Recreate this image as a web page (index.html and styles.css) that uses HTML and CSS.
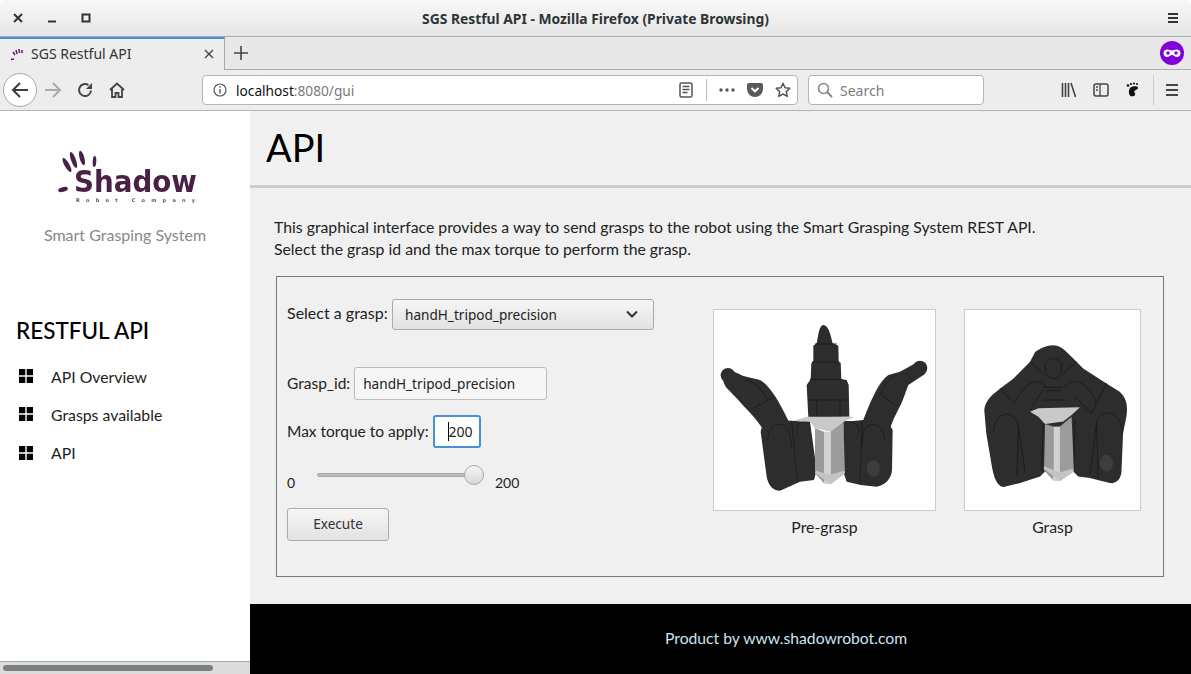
FILE: index.html
```html
<!DOCTYPE html>
<html lang="en">
<head>
<meta charset="utf-8">
<title>SGS Restful API</title>
<link rel="stylesheet" href="styles.css">
</head>
<body>
<header class="titlebar">
  <div class="wm-left">
    <svg class="wm" viewBox="0 0 10 10"><path d="M1 1l8 8M9 1l-8 8" stroke="#2e3436" stroke-width="2"/></svg>
    <svg class="wm" viewBox="0 0 10 10"><path d="M1 8.500h8" stroke="#2e3436" stroke-width="2"/></svg>
    <svg class="wm" viewBox="0 0 10 10"><rect x="1.500" y="1.500" width="7" height="7" fill="none" stroke="#2e3436" stroke-width="2"/></svg>
  </div>
  <div class="wm-title">SGS Restful API - Mozilla Firefox (Private Browsing)</div>
  <svg class="wm-menu" viewBox="0 0 12 12"><path d="M1 2h10M1 6h10M1 10h10" stroke="#2e3436" stroke-width="2"/></svg>
</header>
<div class="tabbar">
  <div class="tab">
    <svg class="favicon" viewBox="0 0 16 16"><path d="M2 13.500l3 -.5M4 6l2 3M7 4l1 4M10 3l.5 4M13 4v3" stroke="#5b1f6b" stroke-width="1.500" fill="none"/></svg>
    <span class="tab-title">SGS Restful API</span>
    <svg class="tab-close" viewBox="0 0 10 10"><path d="M1 1l8 8M9 1l-8 8" stroke="#444" stroke-width="1.400"/></svg>
  </div>
  <svg class="newtab" viewBox="0 0 14 14"><path d="M7 0v14M0 7h14" stroke="#444" stroke-width="1.600"/></svg>
  <svg class="private" viewBox="0 0 24 24"><circle cx="12" cy="12" r="12" fill="#8000d7"/><path d="M3.500 12c0-2.500 2-3.500 4-3.500 2 0 3 1 4.500 1s2.500-1 4.500-1 4 1 4 3.500-1.500 4-3.500 4c-2.500 0-3-2-5-2s-2.500 2-5 2c-2 0-3.500-1.500-3.500-4z" fill="#fff"/><circle cx="8" cy="12" r="1.700" fill="#8000d7"/><circle cx="16" cy="12" r="1.700" fill="#8000d7"/></svg>
</div>
<nav class="navbar">
  <div class="back"><svg class="ic18" viewBox="0 0 18 18"><path d="M17 9H2M9 2L2 9l7 7" fill="none" stroke="#3d3d3d" stroke-width="2"/></svg></div>
  <div class="tbtn"><svg class="ic18" viewBox="0 0 18 18"><path d="M1 9h15M9 2l7 7-7 7" fill="none" stroke="#aaa" stroke-width="2"/></svg></div>
  <div class="tbtn"><svg class="ic16" viewBox="0 0 16 16"><path d="M14 8.500A6 6 0 1 1 11.500 3.200" fill="none" stroke="#444" stroke-width="2"/><path d="M15 1v6H9z" fill="#444"/></svg></div>
  <div class="tbtn"><svg class="ic16" viewBox="0 0 16 16"><path d="M1 8l7-6.500L15 8M3 7v8h3.500v-4h3v4H13V7" fill="none" stroke="#444" stroke-width="1.800"/></svg></div>
  <div class="urlbar">
    <svg class="info" viewBox="0 0 14 14"><circle cx="7" cy="7" r="6" fill="none" stroke="#555" stroke-width="1.200"/><path d="M7 6v4.500M7 3.300v1.500" stroke="#555" stroke-width="1.400"/></svg>
    <span class="url"><span class="host">localhost</span>:8080/gui</span>
    <svg class="reader" viewBox="0 0 14 16"><rect x="1" y="1" width="12" height="14" rx="1.500" fill="none" stroke="#555" stroke-width="1.500"/><path d="M3.500 4.500h7M3.500 7.500h7M3.500 10.500h5" stroke="#555" stroke-width="1.300"/></svg>
    <span class="url-sep"></span>
    <svg class="dots" viewBox="0 0 16 4"><circle cx="2" cy="2" r="1.700" fill="#555"/><circle cx="8" cy="2" r="1.700" fill="#555"/><circle cx="14" cy="2" r="1.700" fill="#555"/></svg>
    <svg class="pocket" viewBox="0 0 16 14"><path d="M2 0h12a2 2 0 0 1 2 2v4A8 8 0 0 1 0 6V2a2 2 0 0 1 2-2z" fill="#5a5a5a"/><path d="M4.500 5L8 8.300 11.500 5" fill="none" stroke="#fff" stroke-width="2"/></svg>
    <svg class="star" viewBox="0 0 16 16"><path d="M8 1.300l2 4.400 4.800.6-3.500 3.300.9 4.800L8 12l-4.200 2.400.9-4.800L1.200 6.300 6 5.700z" fill="none" stroke="#555" stroke-width="1.500" stroke-linejoin="round"/></svg>
  </div>
  <div class="searchbar">
    <svg class="mag" viewBox="0 0 16 16"><circle cx="6.500" cy="6.500" r="5" fill="none" stroke="#888" stroke-width="1.600"/><path d="M10 10l5 5" stroke="#888" stroke-width="2"/></svg>
    <span class="search-text">Search</span>
  </div>
  <div class="tbtn lib"><svg class="ic16" viewBox="0 0 16 16"><path d="M1.500 1v14M4.500 1v14M7.500 1v14M10 1l4.500 14" fill="none" stroke="#444" stroke-width="1.600"/></svg></div>
  <div class="tbtn"><svg class="ic16" viewBox="0 0 16 16"><rect x="1" y="2" width="14" height="12" rx="2" fill="none" stroke="#444" stroke-width="1.500"/><path d="M7 2v12M3 5h2M3 8h2" stroke="#444" stroke-width="1.300"/></svg></div>
  <div class="tbtn"><svg class="ic16" viewBox="0 0 16 16"><path d="M5.500 5.500c3-2 7-1.500 7.500 0 .5 1.500-2.500 2.500-3.500 3.500s1.500 2 .5 4-5.500 2-6-1.500c-.3-2.500 0-4.500 1.500-6z" fill="#111"/><circle cx="3" cy="3.500" r="1.300" fill="#111"/><circle cx="6" cy="2" r="1.100" fill="#111"/><circle cx="9" cy="1.500" r="1.100" fill="#111"/><circle cx="12" cy="2" r="1" fill="#111"/></svg></div>
  <span class="nav-sep"></span>
  <div class="tbtn"><svg class="ic16" viewBox="0 0 16 16"><path d="M2 3h12M2 8h12M2 13h12" stroke="#444" stroke-width="1.800"/></svg></div>
</nav>
<div class="page">
  <aside class="sidebar">
    <div class="side-scroll">
      <svg class="logo" viewBox="0 0 190 66">
        <g fill="#4a2145">
          <ellipse cx="7" cy="40.500" rx="5" ry="2.300" transform="rotate(-15 7 40.500)"/>
          <ellipse cx="11" cy="16" rx="2.400" ry="8" transform="rotate(-30 11 16)"/>
          <ellipse cx="17.500" cy="11" rx="2.400" ry="8.500" transform="rotate(-20 17.500 11)"/>
          <ellipse cx="26" cy="9" rx="2.400" ry="7.500" transform="rotate(-15 26 9)"/>
          <ellipse cx="38.500" cy="12.500" rx="1.800" ry="5.500" transform="rotate(3 38.500 12.500)"/>
        </g>
        <text class="logo-main" x="18" y="43" textLength="123" lengthAdjust="spacingAndGlyphs">Shadow</text>
        <text class="logo-sub" x="20" y="53" textLength="119">Robot Company</text>
      </svg>
      <div class="brand">Smart Grasping System</div>
      <h2 class="side-title">RESTFUL API</h2>
      <ul class="side-nav">
        <li class="side-item"><svg class="grid-ic" viewBox="0 0 14 14"><path d="M0 0h6.300v6.300H0zM7.700 0H14v6.300H7.700zM0 7.700h6.300V14H0zM7.700 7.700H14V14H7.700z" fill="#000"/></svg>API Overview</li>
        <li class="side-item"><svg class="grid-ic" viewBox="0 0 14 14"><path d="M0 0h6.300v6.300H0zM7.700 0H14v6.300H7.700zM0 7.700h6.300V14H0zM7.700 7.700H14V14H7.700z" fill="#000"/></svg>Grasps available</li>
        <li class="side-item"><svg class="grid-ic" viewBox="0 0 14 14"><path d="M0 0h6.300v6.300H0zM7.700 0H14v6.300H7.700zM0 7.700h6.300V14H0zM7.700 7.700H14V14H7.700z" fill="#000"/></svg>API</li>
      </ul>
    </div>
    <div class="hscroll"><div class="hthumb"></div></div>
  </aside>
  <main class="main">
    <div class="content">
      <h1 class="page-title">API</h1>
      <p class="intro">This graphical interface provides a way to send grasps to the robot using the Smart Grasping System REST API.<br>Select the grasp id and the max torque to perform the grasp.</p>
      <section class="panel">
        <form class="controls">
          <div class="row">
            <label class="lbl lbl-select">Select a grasp:</label>
            <div class="select"><span>handH_tripod_precision</span><svg class="chev" viewBox="0 0 12 8"><path d="M1 1.500l5 5 5-5" fill="none" stroke="#2e3436" stroke-width="2"/></svg></div>
          </div>
          <div class="row row-id">
            <label class="lbl">Grasp_id:</label>
            <input class="text-in" type="text" value="handH_tripod_precision">
          </div>
          <div class="row row-torque">
            <label class="lbl">Max torque to apply:</label>
            <div class="torque"><span class="caret"></span>200</div>
          </div>
          <div class="row row-slider">
            <span class="min">0</span>
            <div class="slider"><div class="thumb"></div></div>
            <span class="max">200</span>
          </div>
          <div class="btn">Execute</div>
        </form>
        <div class="figures">
          <figure class="fig">
            <div class="shot shot-a">
              <svg class="hand" viewBox="42 30 663 600">
                <g fill="#2d2d2d">
                  <path d="M370 75C385 75 392 105 398 130L415 137L416 185L422 188L424 237L440 240L446 255L448 350L325 352L320 255L332 238L334 190L340 183L340 137L350 130C355 105 358 75 370 75Z"/>
                  <circle cx="84" cy="226" r="22"/>
                  <circle cx="660" cy="204" r="22"/>
                  <path d="M70 245L103 215L130 228L180 240C215 260 245 320 268 368L190 392C175 360 140 330 110 295L78 262Z"/>
                  <path d="M675 222L642 192L600 215L565 225C535 245 510 310 488 365L570 388C580 350 600 325 612 290L625 255Z"/>
                  <path d="M182 395C185 372 210 358 240 360L330 366L350 510L342 540L300 545L285 552L240 572C218 572 205 555 200 530Z"/>
                  <path d="M578 390C570 370 530 358 490 360L430 366L428 510L440 545L482 555L530 560C560 555 575 530 576 510Z"/>
                </g>
                <g fill="none" stroke="#1d1d1d" stroke-width="3">
                  <path d="M345 132H410M336 186H418M330 238H425M325 300H440M350 300V350M420 300V350"/>
                  <path d="M203 420C205 365 262 358 268 400L275 440M275 365L292 545M330 366C300 360 285 375 292 400"/>
                  <path d="M555 420C552 365 498 358 490 400L486 440M486 365L480 552M430 366C460 360 478 375 478 400"/>
                  <path d="M160 325L222 290M135 240C165 245 185 270 200 295M590 320L545 285M590 225C565 235 550 260 540 285"/>
                </g>
                <ellipse cx="520" cy="505" rx="20" ry="25" fill="#3d3d3d"/>
                <path d="M280 362L320 350H465L430 365L395 395L345 385L330 365Z" fill="#c9c9c9"/>
                <path d="M345 385L372 395V550L345 520Z" fill="#9a9a9a"/>
                <path d="M372 395H392V552H372Z" fill="#d2d2d2"/>
                <path d="M392 395L430 365L435 520L392 552Z" fill="#9c9c9c"/>
                <path d="M345 518L390 552L435 520L432 512L390 524L348 512Z" fill="#c4c4c4"/>
              </svg>
            </div>
            <figcaption class="cap">Pre-grasp</figcaption>
          </figure>
          <figure class="fig">
            <div class="shot shot-b">
              <svg class="hand" viewBox="44 30 527 600">
                <path d="M310 135C325 135 340 145 350 155L370 175L400 205L470 250L510 275C530 295 535 315 530 350L520 400L515 520C510 545 495 552 480 550L420 535L385 530L370 515L285 515L270 530L210 550L160 562C140 560 130 530 125 500L108 400L102 330C105 300 125 285 150 265L190 235L240 185L255 155C270 145 290 135 310 135Z" fill="#2d2d2d"/>
                <g fill="none" stroke="#1b1b1b" stroke-width="3">
                  <path d="M130 400C130 330 195 325 205 380L200 530M205 380L225 520M280 370L275 515"/>
                  <path d="M518 400C515 330 450 320 440 370L445 535M440 370L420 525M375 360L372 515"/>
                  <path d="M190 310C225 250 265 225 285 260L240 330M345 260C370 225 420 250 440 310L425 340L375 290"/>
                  <path d="M285 262H340M287 272H335M280 300H345M285 190C300 170 320 170 335 190C340 225 320 235 310 235C295 235 285 225 285 190Z"/>
                  <path d="M240 185L285 225M380 185L335 225M150 265L190 310M470 250L440 310"/>
                </g>
                <ellipse cx="470" cy="490" rx="20" ry="25" fill="#3d3d3d"/>
                <path d="M240 335L265 325L390 322L365 345L340 365L285 372L265 350Z" fill="#c9c9c9"/>
                <path d="M285 372L310 380V542L282 512Z" fill="#9a9a9a"/>
                <path d="M310 380H330V544H310Z" fill="#d2d2d2"/>
                <path d="M330 380L365 350L372 515L330 544Z" fill="#9c9c9c"/>
                <path d="M280 505L328 544L372 515L368 507L328 518L284 500Z" fill="#c4c4c4"/>
              </svg>
            </div>
            <figcaption class="cap">Grasp</figcaption>
          </figure>
        </div>
      </section>
    </div>
    <footer class="footer">Product by www.shadowrobot.com</footer>
  </main>
</div>
</body>
</html>
```
FILE: styles.css
```css
* { box-sizing: border-box; }
html, body { margin: 0; height: 100%; overflow: hidden; }
body { display: flex; flex-direction: column; width: 1191px; height: 674px; font-family: "Lato", "Open Sans", sans-serif; background: #fff; color: #111; }

.titlebar { height: 37px; display: flex; align-items: center; position: relative; background: linear-gradient(#f8f8f8, #e6e6e6); border-bottom: 1px solid #aaa; padding: 0 0 0 13px; border-radius: 5px 5px 0 0; }
.wm-left { display: flex; gap: 14px; width: 140px; }
.wm { width: 10px; height: 10px; display: block; margin-right: 10px; }
.wm-title { position: absolute; left: 0; right: 0; text-align: center; font: bold 13.850px "Noto Sans", sans-serif; color: #2e3436; }
.wm-menu { position: absolute; right: 12px; top: 12px; width: 12px; height: 12px; }

.tabbar { height: 33px; display: flex; align-items: center; background: #e8e8e8; border-bottom: 1px solid #aaa; }
.tab { width: 225px; height: 33px; margin-bottom: -1px; display: flex; align-items: center; background: #ededed; border-top: 2px solid #4a90d9; border-right: 1px solid #aaa; padding: 0 10px 2px 9px; }
.favicon { width: 16px; height: 16px; margin-right: 6px; }
.tab-title { flex: 1; font: 14px "Noto Sans", sans-serif; color: #333; }
.tab-close { width: 10px; height: 10px; }
.newtab { width: 14px; height: 14px; margin-left: 9px; }
.private { width: 24px; height: 24px; margin-left: auto; margin-right: 7px; }

.navbar { height: 41px; display: flex; align-items: center; background: #ededed; border-bottom: 1px solid #b5b5b5; padding-left: 3px; }
.back { width: 34px; height: 34px; border-radius: 50%; background: #fff; border: 1px solid #a8a8a8; display: flex; align-items: center; justify-content: center; }
.tbtn { width: 32px; height: 32px; display: flex; align-items: center; justify-content: center; }
.ic18 { width: 18px; height: 18px; }
.ic16 { width: 16px; height: 16px; }
.urlbar { margin-left: 69px; width: 596px; height: 30px; background: #fff; border: 1px solid #b4b4b4; border-radius: 4px; display: flex; align-items: center; padding: 0 6px 0 10px; }
.info { width: 14px; height: 14px; margin-right: 9px; }
.url { flex: 1; font: 13.700px "Noto Sans", sans-serif; color: #7a7a7a; }
.host { color: #111; }
.reader { width: 14px; height: 16px; margin-right: 13px; }
.url-sep { width: 1px; height: 22px; background: #bbb; margin-right: 12px; }
.dots { width: 16px; height: 4px; margin-right: 12px; }
.pocket { width: 16px; height: 14px; margin-right: 12px; }
.star { width: 16px; height: 16px; }
.searchbar { margin-left: 10px; width: 176px; height: 30px; background: #fff; border: 1px solid #b4b4b4; border-radius: 4px; display: flex; align-items: center; padding-left: 8px; }
.mag { width: 16px; height: 16px; margin-right: 7px; }
.search-text { font: 14px "Noto Sans", sans-serif; color: #7d7d7d; }
.lib { margin-left: 69px; }
.nav-sep { width: 1px; height: 30px; background: #ccc; margin: 0 2px 0 4px; }

.page { flex: 1; display: flex; min-height: 0; }
.sidebar { width: 250px; display: flex; flex-direction: column; background: #fff; }
.side-scroll { flex: 1; padding-top: 38px; }
.logo { display: block; width: 190px; height: 66px; margin-left: 56px; filter: blur(.3px); }
.logo-main { font: bold 30px "DejaVu Sans", sans-serif; fill: #4a2145; }
.logo-sub { font: bold 5px "DejaVu Sans", sans-serif; fill: #6a4a66; }
.brand { margin-top: 10px; text-align: center; font-size: 16px; color: #888; }
.side-title { margin: 72px 0 0 16px; font-size: 22.500px; font-weight: 500; color: #000; line-height: 30px; }
.side-nav { list-style: none; margin: 11px 0 0; padding: 0 0 0 19px; }
.side-item { height: 38.300px; display: flex; align-items: center; font-size: 15.800px; color: #222; }
.grid-ic { width: 14px; height: 14px; margin-right: 18px; }
.hscroll { height: 13px; background: #dcdcdc; border-top: 1px solid #aaa; padding: 3px 37px 3px 3px; }
.hthumb { height: 6px; border-radius: 3px; background: #7b8080; }

.main { flex: 1; display: flex; flex-direction: column; background: #f0f0f0; }
.content { flex: 1; }
.page-title { margin: 0; height: 77px; padding: 13px 0 0 16px; font-size: 38px; line-height: 46px; font-weight: 400; color: #000; border-bottom: 3px solid #ccc; }
.intro { margin: 28px 0 0 24px; font-size: 15.800px; line-height: 22px; color: #222; }
.panel { margin: 16px 0 0 26px; width: 888px; height: 301px; border: 1px solid #777; display: flex; }
.controls { width: 436px; padding: 22px 0 0 10px; display: flex; flex-direction: column; }
.row { display: flex; align-items: center; }
.lbl { font-size: 15.500px; color: #222; margin-right: 4px; padding-bottom: 2px; }
.lbl-select { width: 105px; flex: none; margin-right: 0; font-size: 16px; padding-bottom: 4px; white-space: nowrap; }
.select { width: 262px; height: 31px; border: 1px solid #aaa; border-radius: 3px; background: linear-gradient(#f6f6f6, #e2e2e2); display: flex; align-items: center; justify-content: space-between; padding: 0 15px 1px 12px; font: 13.600px "Noto Sans", sans-serif; color: #222; }
.chev { width: 12px; height: 8px; }
.row-id { margin-top: 37px; }
.text-in { width: 193px; height: 33px; border: 1px solid #bbb; border-radius: 3px; background: #f6f6f6; padding: 0 8px 1px; font: 13.600px "Noto Sans", sans-serif; color: #222; outline: none; }
.row-torque { margin-top: 15px; }
.torque { position: relative; width: 48px; height: 33px; border: 2px solid #4a90d9; border-radius: 3px; background: #fff; text-align: right; padding-right: 6px; font: 14px/29px "Noto Sans", sans-serif; color: #222; }
.caret { position: absolute; left: 13px; top: 5px; width: 1px; height: 19px; background: #000; }
.row-slider { margin-top: 15px; height: 38px; }
.min { width: 30px; font-size: 14px; color: #222; }
.slider { position: relative; width: 167px; height: 4px; background: #bbb; border: 1px solid #aaa; border-radius: 2px; margin-top: -14px; }
.thumb { position: absolute; right: -1px; top: -9px; width: 20px; height: 20px; border-radius: 50%; border: 1px solid #aaa; background: linear-gradient(#f4f4f4, #d8d8d8); }
.max { margin-left: 11px; font-size: 14px; color: #222; }
.btn { margin-top: 7px; width: 102px; height: 33px; border: 1px solid #aaa; border-radius: 3px; background: linear-gradient(#f6f6f6, #e2e2e2); text-align: center; font: 13.600px/30px "Noto Sans", sans-serif; color: #333; }
.figures { display: flex; padding-top: 32px; }
.fig { margin: 0; display: flex; flex-direction: column; align-items: center; }
.fig + .fig { margin-left: 28px; }
.shot { height: 202px; background: #fff; border: 1px solid #ccc; }
.shot-a { width: 223px; }
.shot-b { width: 177px; }
.hand { display: block; width: 100%; height: 100%; filter: blur(.4px); }
.cap { margin-top: 6px; font-size: 15.800px; color: #222; line-height: 20px; }
.footer { height: 70px; background: #000; color: #cfe4f2; font-size: 15.700px; line-height: 68px; padding-left: 415px; }
```
